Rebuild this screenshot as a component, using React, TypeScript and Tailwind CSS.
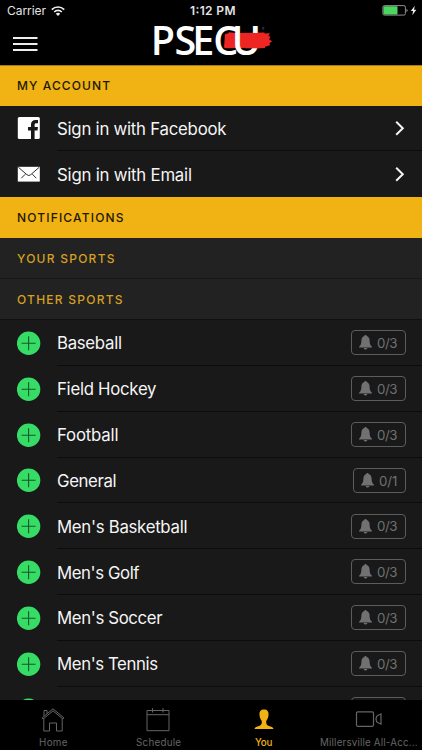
import React from "react";

const font = "font-['Inter','Liberation_Sans',sans-serif]";

type TextProps = { children: string; width: number; size: number; weight?: number; className?: string };

// Single-line label fitted to a fixed width.
function Label({ children, width, size, weight = 400, className = "" }: TextProps) {
  return (
    <svg width={width} height={size + 8} className={`block shrink-0 overflow-visible ${className}`}>
      <text x="0" y={size / 2 + 4 + size * 0.364} fontSize={size} fontWeight={weight} fill="currentColor" textLength={width} lengthAdjust="spacing">
        {children}
      </text>
    </svg>
  );
}

function Chevron() {
  return (
    <svg width="10" height="16" viewBox="0 0 10 16" fill="none" stroke="#f4f4f4" strokeWidth="2" className="mr-[17px]">
      <path d="M1.2 1.8 7.800 8.300 1.2 14.800" />
    </svg>
  );
}

function Bell() {
  return (
    <svg width="13" height="15" viewBox="0 0 12 14" fill="#717171">
      <path d="M6 0c.6 0 1 .4 1 .9 1.700.5 2.700 1.900 2.800 4 .1 3.100.5 4.700 2.200 6v.7H0v-.7c1.700-1.300 2.100-2.900 2.200-6 .1-2.100 1.100-3.500 2.800-4 0-.5.400-.9 1-.9ZM4.300 12.200h3.400c-.2.900-.8 1.400-1.700 1.400s-1.500-.5-1.700-1.400Z" />
    </svg>
  );
}

function Plus() {
  return (
    <svg width="24" height="24" viewBox="0 0 24 24">
      <circle cx="11.600" cy="12.300" r="11.700" fill="#36dc66" />
      <path d="M11.600 5.300v14M4.600 12.300h14" stroke="#14582a" strokeWidth="1.100" />
    </svg>
  );
}

const sports: [string, number, string][] = [
  ["Baseball", 65, "0/3"],
  ["Field Hockey", 99.5, "0/3"],
  ["Football", 61.5, "0/3"],
  ["General", 59.5, "0/1"],
  ["Men's Basketball", 130.5, "0/3"],
  ["Men's Golf", 82.5, "0/3"],
  ["Men's Soccer", 105.5, "0/3"],
  ["Men's Tennis", 101, "0/3"],
  ["Men's Wrestling", 121, "0/3"],
];

function SportRow({ name, width, count }: { name: string; width: number; count: string }) {
  return (
    <div className="flex h-[45.86px] shrink-0 items-stretch pl-[17px]">
      <div className="flex w-[40px] shrink-0 items-center"><Plus /></div>
      <div className="flex flex-1 items-center justify-between border-b border-[#0c0c0c] pl-[0.4px] pr-[16.5px] pt-[0.5px]">
        <Label width={width} size={16.8} className="text-[#f5f5f5]">{name}</Label>
        <div className={`flex h-[25px] items-center gap-[5.5px] rounded-[4px] border border-[#5c5c5c] pl-[6.5px] ${count === "0/1" ? "w-[52.500px]" : "w-[54.500px]"}`}>
          <Bell />
          <Label width={count === "0/1" ? 18.5 : 20.5} size={13.3} className="text-[#717171] pt-[0.5px]">{count}</Label>
        </div>
      </div>
    </div>
  );
}

export default function App() {
  return (
    <div className={`flex h-[750px] w-[422px] flex-col overflow-hidden bg-[#191919] ${font}`}>
      <header className="flex h-[65px] shrink-0 flex-col bg-black text-[#e4e4e4]">
        <div className="grid h-[22px] grid-cols-3 items-center">
          <div className="flex items-center gap-[5px] pl-[7px]">
            <Label width={39} size={12}>Carrier</Label>
            <svg width="14" height="11" viewBox="0 0 14 11" fill="none" stroke="#eee" strokeWidth="1.700">
              <path d="M.8 3.600a8.700 8.700 0 0 1 12.400 0M3.200 6a5.400 5.400 0 0 1 7.600 0" />
              <path d="m7 10-2.200-2.300a3.200 3.200 0 0 1 4.400 0Z" fill="#eee" stroke="none" />
            </svg>
          </div>
          <div className="flex justify-center pl-[3px]"><Label width={45.5} size={12} weight={600}>1:12 PM</Label></div>
          <div className="flex justify-end pr-[4px]">
            <svg width="36" height="12" viewBox="0 0 36 12">
              <rect x=".9" y=".6" width="22.500" height="9.500" rx="1.500" fill="none" stroke="#8f8f8f" />
              <rect x="1.500" y="1.200" width="14" height="8.300" rx=".7" fill="#4cd661" />
              <path d="M24.500 3.700c1.400.5 1.400 2.900 0 3.400Z" fill="#aaa" />
              <path d="m32.800.7-4 5.300h2.300l-.8 4.200 4-5.400H32Z" fill="#eee" />
            </svg>
          </div>
        </div>
        <div className="flex h-[43px] items-start">
          <svg width="25" height="16" viewBox="0 0 25 16" className="ml-[13px] mt-[13.500px]" stroke="#eee" strokeWidth="2"><path d="M0 2h24.500M0 8h24.500M0 14h24.500" /></svg>
          <svg width="130" height="38" viewBox="150 22 130 38" className="ml-[112px] overflow-visible">
            <path d="m225 34 3-.5 1-1.200 7 .7 28-.4 1 .9 5-.3-1.500 2.500 2 1.500-1.500 2 3 2-2.500 2 .5 2-5 1.500v1.200l-5 .3-6-.4-28 .4-2-.6Z" fill="#ed2624" />
            <text y="55" x="150.800 174.600 192.300 213.300 231.700" fill="#fff" fontFamily="'Open Sans'" fontWeight="600" fontSize="39.500">PSECU</text>
            <path d="M245.500 33h14v15.300h-14Z" fill="#ed2624" />
            <text x="262" y="30" fontSize="3.500" fill="#666">R</text>
          </svg>
        </div>
      </header>

      <div className="flex h-[40.500px] shrink-0 items-center border-t border-[#a87c14] bg-[#f1b213] pl-[17px]"><Label width={93} size={12} weight={500} className="text-[#201803]">MY ACCOUNT</Label></div>
      <div className="flex h-[45.700px] shrink-0 pl-[17px]">
        <div className="flex w-[40px] items-center">
          <svg width="24" height="24" viewBox="0 0 24 24"><rect x=".8" y="1" width="22" height="22" rx="1.500" fill="#fff" /><path d="M14 23v-8.500h-3V11h3V8.600c0-3 1.800-4.600 4.600-4.600H21v3.200h-1.700c-1.300 0-1.700.6-1.700 1.700V11H21l-.5 3.500h-2.900V23Z" fill="#191919" /></svg>
        </div>
        <div className="flex flex-1 items-center justify-between border-b border-[#0c0c0c] pl-[0.4px] pt-[0.5px]"><Label width={169.500} size={16.8} className="text-[#f5f5f5]">Sign in with Facebook</Label><Chevron /></div>
      </div>
      <div className="flex h-[45.800px] shrink-0 pl-[17px]">
        <div className="flex w-[40px] items-center">
          <svg width="24" height="16" viewBox="0 0 24 16"><path d="M.8.8h22v14.800h-22Z" fill="#fff" /><path d="m1.300 1.200 8.600 7.500q1.900 1.700 3.800 0L22.300 1.200M4.300 12.200l4-4M19.300 12.200l-4-4" fill="none" stroke="#191919" strokeWidth=".9" /></svg>
        </div>
        <div className="flex flex-1 items-center justify-between pl-[0.4px]"><Label width={135} size={16.8} className="text-[#f5f5f5]">Sign in with Email</Label><Chevron /></div>
      </div>
      <div className="flex h-[41px] shrink-0 items-center bg-[#f1b213] pl-[17px] pt-[1px]"><Label width={106.500} size={12} weight={500} className="text-[#201803]">NOTIFICATIONS</Label></div>
      <div className="flex h-[41px] shrink-0 items-center border-b border-[#171717] bg-[#222] pl-[17px] pt-[2px]"><Label width={97.500} size={12} weight={500} className="text-[#d6a021]">YOUR SPORTS</Label></div>
      <div className="flex h-[41px] shrink-0 items-center border-b border-[#101010] bg-[#222] pl-[17px] pt-[2px]"><Label width={105.500} size={12} weight={500} className="text-[#d6a021]">OTHER SPORTS</Label></div>

      <main className="flex min-h-0 flex-1 flex-col overflow-hidden">
        {sports.map(([name, width, count]) => <SportRow key={name} name={name} width={width} count={count} />)}
      </main>

      <nav className="grid h-[50.500px] shrink-0 grid-cols-4 bg-black text-[#656565]">
        <div className="flex flex-col items-center pt-[6px]">
          <svg width="24" height="26" viewBox="0 0 24 26" fill="none" stroke="#656565" strokeWidth="1"><path d="M1.200 11.800 12 2.800l10.800 9-.9 1.200L12 4.800 2.100 13ZM2.800 12.600V25h5.700v-8h7v8h5.700V12.600M3 10.200V4.500h3v3.200" /></svg>
          <Label width={28.500} size={9.800} className="mt-[2px]">Home</Label>
        </div>
        <div className="flex flex-col items-center pt-[6px]">
          <svg width="24" height="26" viewBox="0 0 24 26" fill="none" stroke="#656565" strokeWidth="1"><path d="M1 4.500h22v20.200H1ZM1 8.700h22M6.500 2.200v4.300M17 2.200v4.300" /></svg>
          <Label width={45} size={9.800} className="mt-[2px]">Schedule</Label>
        </div>
        <div className="flex flex-col items-center pt-[6px] text-[#f1b213]">
          <svg width="22" height="26" viewBox="0 0 22 26" fill="currentColor"><path d="M11 3.500c3.200 0 4.800 2 4.500 5.200-.2 2.700-.9 4.600-2.200 6-.4 3.400.6 4.800 3.600 5.600 2 .5 3.300 1.100 3.600 2.700H1.500c.3-1.600 1.600-2.200 3.600-2.700 3-.8 4-2.200 3.600-5.600-1.300-1.400-2-3.300-2.200-6C6.200 5.500 7.800 3.500 11 3.500Z" /></svg>
          <Label width={17.500} size={9.800} weight={500} className="mt-[2px]">You</Label>
        </div>
        <div className="flex flex-col items-center pt-[6px]">
          <svg width="28" height="26" viewBox="0 0 28 26" fill="none" stroke="#656565" strokeWidth="1.200"><rect x="1.500" y="5.800" width="17" height="14.500" rx="1.200" /><path d="m26 8-3 1.200q-2 .8-2 3.800t2 3.800l3 1.200Z" /></svg>
          <Label width={97.500} size={9.800} className="mt-[2px] -ml-[2px]">Millersville All-Acc...</Label>
        </div>
      </nav>
    </div>
  );
}
